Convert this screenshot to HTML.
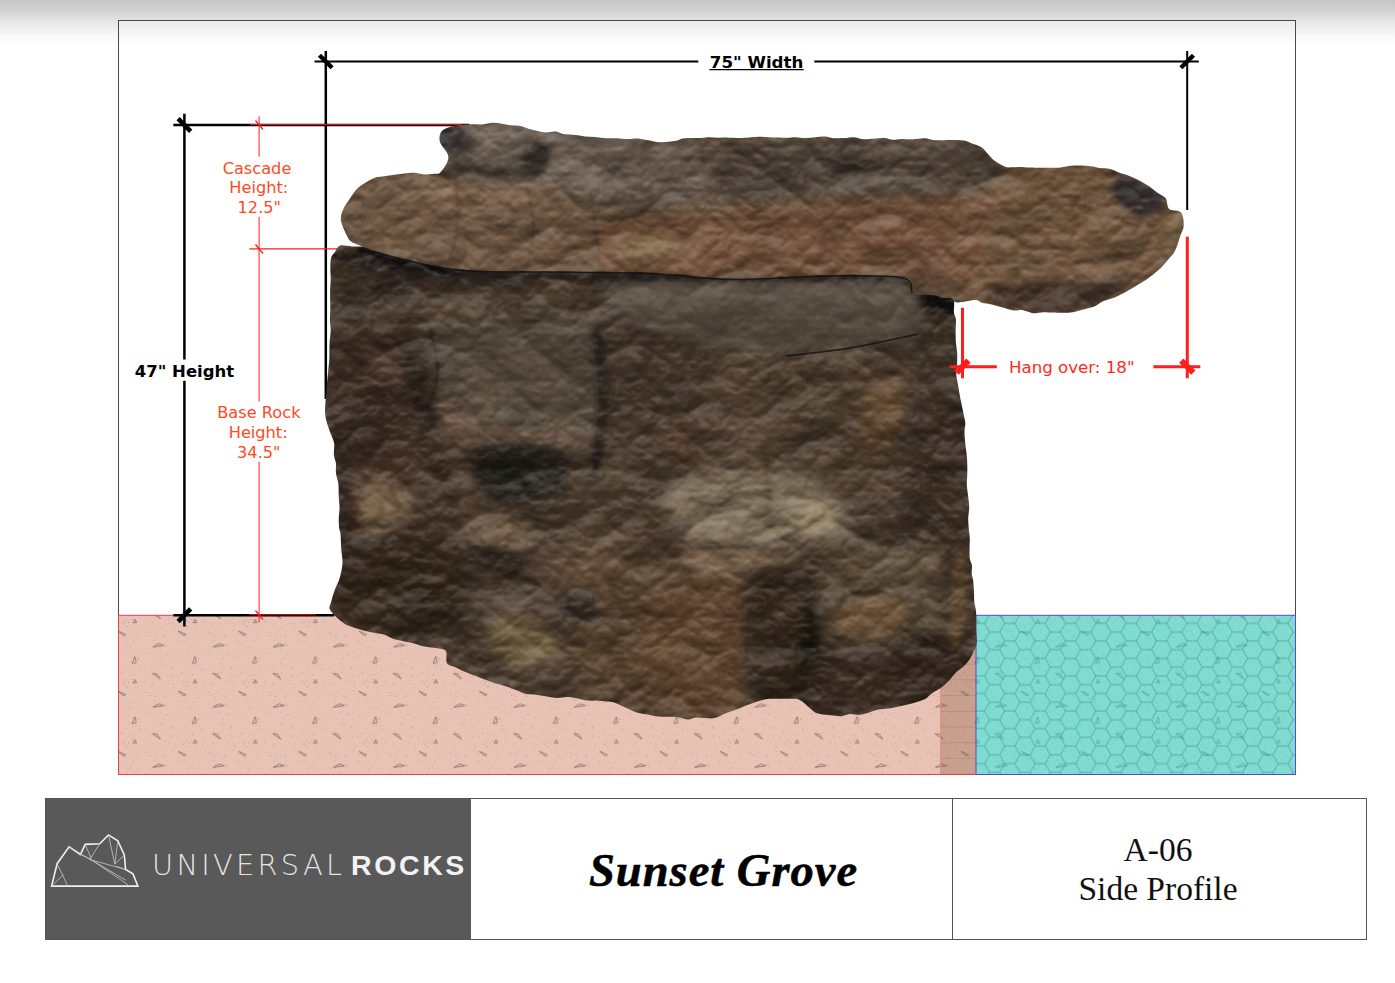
<!DOCTYPE html>
<html lang="en"><head><meta charset="utf-8"><title>Sunset Grove A-06 Side Profile</title>
<style>
html,body{margin:0;padding:0;background:#fff;}
body{width:1395px;height:983px;overflow:hidden;position:relative;font-family:"Liberation Sans",sans-serif;}
#top{position:absolute;left:0;top:0;width:1395px;height:44px;background:linear-gradient(#c6c6c6 0px,#d4d4d4 12px,#e9e9e9 24px,#f8f8f8 35px,#fff 44px);}
svg#dwg{position:absolute;left:0;top:0;}
.vd{font-family:"DejaVu Sans","Liberation Sans",sans-serif;}
#tbl{position:absolute;left:45px;top:798px;width:1322px;height:142px;border:1px solid #555;box-sizing:border-box;background:#fff;}
#c1{position:absolute;left:0;top:0;width:425px;height:140px;background:#595959;}
#c2{position:absolute;left:425px;top:0;width:482px;height:140px;border-right:1px solid #555;box-sizing:border-box;}
#c3{position:absolute;left:907px;top:0;width:413px;height:140px;}
#title{position:absolute;left:12px;top:1.6px;width:100%;text-align:center;letter-spacing:1.0px;-webkit-text-stroke:0.55px #000;font-family:"Liberation Serif",serif;font-weight:bold;font-style:italic;font-size:46.5px;line-height:139px;color:#000;white-space:nowrap;}
#c3 div{position:absolute;left:-1.5px;width:100%;text-align:center;font-family:"Liberation Serif",serif;font-size:33.5px;line-height:39px;color:#111;white-space:nowrap;}
#uni{position:absolute;left:106px;top:46px;font-family:"DejaVu Sans Light","DejaVu Sans","Liberation Sans",sans-serif;font-weight:200;font-size:28.8px;line-height:40px;letter-spacing:3.3px;color:#e4e4e4;white-space:nowrap;}
#rocks{position:absolute;left:305px;top:46px;font-family:"Liberation Sans",sans-serif;font-weight:bold;font-size:28.5px;line-height:40px;letter-spacing:2.6px;color:#f2f2f2;white-space:nowrap;}
</style></head><body>
<div id="top"></div>
<svg id="dwg" width="1395" height="983" viewBox="0 0 1395 983">
<defs>

<pattern id="soil" x="134.9" y="621" width="60.2" height="60.2" patternUnits="userSpaceOnUse">
<circle cx="14.3" cy="32.8" r="0.4" fill="#7c6f69"/>
<circle cx="55.1" cy="28.5" r="0.3" fill="#7c6f69"/>
<circle cx="36.5" cy="54.7" r="0.45" fill="#7c6f69"/>
<circle cx="15.6" cy="14.1" r="0.45" fill="#7c6f69"/>
<circle cx="32.6" cy="33.1" r="0.45" fill="#7c6f69"/>
<circle cx="38.5" cy="9.1" r="0.35" fill="#7c6f69"/>
<circle cx="52.3" cy="31.5" r="0.3" fill="#7c6f69"/>
<circle cx="40.4" cy="3.9" r="0.3" fill="#7c6f69"/>
<circle cx="18.1" cy="1.9" r="0.4" fill="#7c6f69"/>
<circle cx="28.5" cy="43.3" r="0.45" fill="#7c6f69"/>
<circle cx="43.0" cy="55.5" r="0.45" fill="#7c6f69"/>
<circle cx="43.8" cy="34.7" r="0.35" fill="#7c6f69"/>
<circle cx="52.9" cy="5.9" r="0.35" fill="#7c6f69"/>
<circle cx="29.8" cy="15.5" r="0.45" fill="#7c6f69"/>
<circle cx="46.9" cy="51.5" r="0.45" fill="#7c6f69"/>
<circle cx="30.5" cy="23.2" r="0.4" fill="#7c6f69"/>
<circle cx="32.2" cy="24.5" r="0.35" fill="#7c6f69"/>
<circle cx="54.4" cy="41.1" r="0.3" fill="#7c6f69"/>
<circle cx="51.6" cy="59.7" r="0.35" fill="#7c6f69"/>
<circle cx="42.1" cy="19.6" r="0.3" fill="#7c6f69"/>
<circle cx="43.0" cy="12.7" r="0.4" fill="#7c6f69"/>
<circle cx="17.2" cy="3.8" r="0.45" fill="#7c6f69"/>
<circle cx="5.3" cy="48.2" r="0.45" fill="#7c6f69"/>
<circle cx="54.0" cy="1.2" r="0.45" fill="#7c6f69"/>
<circle cx="46.3" cy="52.5" r="0.3" fill="#7c6f69"/>
<circle cx="36.4" cy="45.9" r="0.45" fill="#7c6f69"/>
<circle cx="43.3" cy="19.9" r="0.4" fill="#7c6f69"/>
<circle cx="30.4" cy="60.1" r="0.4" fill="#7c6f69"/>
<circle cx="0.4" cy="6.5" r="0.3" fill="#7c6f69"/>
<circle cx="57.1" cy="58.5" r="0.4" fill="#7c6f69"/>
<circle cx="36.8" cy="9.4" r="0.3" fill="#7c6f69"/>
<circle cx="59.0" cy="20.5" r="0.4" fill="#7c6f69"/>
<circle cx="57.7" cy="54.0" r="0.45" fill="#7c6f69"/>
<circle cx="22.7" cy="52.4" r="0.45" fill="#7c6f69"/>
<circle cx="38.8" cy="35.9" r="0.3" fill="#7c6f69"/>
<circle cx="37.3" cy="56.6" r="0.4" fill="#7c6f69"/>
<circle cx="26.0" cy="43.4" r="0.35" fill="#7c6f69"/>
<circle cx="56.4" cy="26.3" r="0.4" fill="#7c6f69"/>
<circle cx="31.4" cy="33.0" r="0.3" fill="#7c6f69"/>
<circle cx="47.5" cy="59.4" r="0.4" fill="#7c6f69"/>
<circle cx="1.2" cy="37.1" r="0.35" fill="#7c6f69"/>
<circle cx="3.6" cy="37.8" r="0.45" fill="#7c6f69"/>
<circle cx="21.2" cy="55.2" r="0.4" fill="#7c6f69"/>
<circle cx="44.4" cy="1.3" r="0.3" fill="#7c6f69"/>
<circle cx="57.5" cy="1.3" r="0.4" fill="#7c6f69"/>
<circle cx="15.1" cy="27.5" r="0.4" fill="#7c6f69"/>
<circle cx="10.7" cy="11.2" r="0.4" fill="#7c6f69"/>
<circle cx="50.8" cy="15.9" r="0.45" fill="#7c6f69"/>
<circle cx="6.3" cy="48.9" r="0.35" fill="#7c6f69"/>
<circle cx="18.7" cy="13.4" r="0.4" fill="#7c6f69"/>
<circle cx="14.4" cy="11.3" r="0.45" fill="#7c6f69"/>
<circle cx="39.1" cy="5.8" r="0.4" fill="#7c6f69"/>
<circle cx="57.1" cy="40.6" r="0.35" fill="#7c6f69"/>
<circle cx="26.4" cy="51.5" r="0.35" fill="#7c6f69"/>
<circle cx="4.8" cy="44.7" r="0.35" fill="#7c6f69"/>
<circle cx="53.3" cy="27.2" r="0.35" fill="#7c6f69"/>
<circle cx="47.4" cy="2.0" r="0.35" fill="#7c6f69"/>
<circle cx="19.0" cy="50.3" r="0.35" fill="#7c6f69"/>
<circle cx="52.0" cy="20.5" r="0.3" fill="#7c6f69"/>
<circle cx="48.5" cy="20.8" r="0.35" fill="#7c6f69"/>
<circle cx="25.4" cy="31.2" r="0.4" fill="#7c6f69"/>
<circle cx="28.0" cy="38.2" r="0.4" fill="#7c6f69"/>
<circle cx="25.3" cy="24.7" r="0.45" fill="#7c6f69"/>
<circle cx="9.4" cy="0.3" r="0.45" fill="#7c6f69"/>
<circle cx="33.6" cy="59.3" r="0.35" fill="#7c6f69"/>
<circle cx="1.9" cy="27.5" r="0.4" fill="#7c6f69"/>
<circle cx="32.7" cy="53.6" r="0.3" fill="#7c6f69"/>
<circle cx="51.7" cy="58.5" r="0.3" fill="#7c6f69"/>
<circle cx="48.8" cy="2.7" r="0.35" fill="#7c6f69"/>
<circle cx="54.0" cy="54.2" r="0.3" fill="#7c6f69"/>
<circle cx="0.8" cy="44.9" r="0.35" fill="#7c6f69"/>
<circle cx="30.3" cy="14.4" r="0.3" fill="#7c6f69"/>
<circle cx="31.6" cy="24.9" r="0.3" fill="#7c6f69"/>
<circle cx="20.5" cy="15.2" r="0.45" fill="#7c6f69"/>
<circle cx="48.9" cy="3.7" r="0.35" fill="#7c6f69"/>
<circle cx="11.9" cy="32.2" r="0.3" fill="#7c6f69"/>
<circle cx="10.3" cy="47.7" r="0.35" fill="#7c6f69"/>
<circle cx="49.6" cy="0.5" r="0.45" fill="#7c6f69"/>
<circle cx="3.0" cy="16.3" r="0.4" fill="#7c6f69"/>
<circle cx="37.2" cy="31.3" r="0.3" fill="#7c6f69"/>
<circle cx="28.5" cy="46.7" r="0.3" fill="#7c6f69"/>
<circle cx="51.6" cy="46.7" r="0.3" fill="#7c6f69"/>
<circle cx="7.5" cy="4.1" r="0.3" fill="#7c6f69"/>
<circle cx="51.4" cy="5.2" r="0.45" fill="#7c6f69"/>
<circle cx="19.0" cy="18.9" r="0.4" fill="#7c6f69"/>
<circle cx="23.2" cy="23.5" r="0.4" fill="#7c6f69"/>
<circle cx="21.7" cy="11.5" r="0.4" fill="#7c6f69"/>
<circle cx="25.8" cy="7.7" r="0.3" fill="#7c6f69"/>
<circle cx="43.1" cy="22.9" r="0.3" fill="#7c6f69"/>
<circle cx="34.1" cy="2.6" r="0.45" fill="#7c6f69"/>
<circle cx="36.4" cy="47.1" r="0.45" fill="#7c6f69"/>
<circle cx="38.3" cy="2.6" r="0.45" fill="#7c6f69"/>
<circle cx="3.2" cy="37.8" r="0.4" fill="#7c6f69"/>
<circle cx="25.3" cy="41.8" r="0.45" fill="#7c6f69"/>
<circle cx="1.1" cy="13.2" r="0.4" fill="#7c6f69"/>
<path d="M0.0 -1.7 L1.7 1.7 L-1.7 1.7 Z" fill="none" stroke="#5c5450" stroke-width="0.6" stroke-linejoin="round"/>
<path d="M0.0 58.5 L1.7 61.9 L-1.7 61.9 Z" fill="none" stroke="#5c5450" stroke-width="0.6" stroke-linejoin="round"/>
<path d="M60.2 -1.7 L61.9 1.7 L58.5 1.7 Z" fill="none" stroke="#5c5450" stroke-width="0.6" stroke-linejoin="round"/>
<path d="M60.2 58.5 L61.9 61.9 L58.5 61.9 Z" fill="none" stroke="#5c5450" stroke-width="0.6" stroke-linejoin="round"/>
<path d="M43.5 10.0 L51.0 13.5 L48.5 14.5 Z" fill="none" stroke="#5c5450" stroke-width="0.6" stroke-linejoin="round"/>
<path d="M18.0 26.0 L24.0 22.5 L29.0 24.5 Z" fill="none" stroke="#5c5450" stroke-width="0.6" stroke-linejoin="round"/>
<path d="M-2.7 42.5 L-0.2 35.5 L1.3 41.5 Z" fill="none" stroke="#5c5450" stroke-width="0.6" stroke-linejoin="round"/>
<path d="M57.5 42.5 L60.0 35.5 L61.5 41.5 Z" fill="none" stroke="#5c5450" stroke-width="0.6" stroke-linejoin="round"/>
<path d="M17.5 -7.7 L25.5 -2.2 L22.0 -7.2 Z" fill="none" stroke="#5c5450" stroke-width="0.6" stroke-linejoin="round"/>
<path d="M17.5 52.5 L25.5 58.0 L22.0 53.0 Z" fill="none" stroke="#5c5450" stroke-width="0.6" stroke-linejoin="round"/>
</pattern>
<pattern id="soilt" x="134.9" y="621" width="60.2" height="60.2" patternUnits="userSpaceOnUse">
<circle cx="37.5" cy="44.7" r="0.3" fill="#4aa79c"/>
<circle cx="50.6" cy="46.7" r="0.35" fill="#4aa79c"/>
<circle cx="39.1" cy="54.2" r="0.3" fill="#4aa79c"/>
<circle cx="22.4" cy="52.3" r="0.45" fill="#4aa79c"/>
<circle cx="32.7" cy="34.6" r="0.3" fill="#4aa79c"/>
<circle cx="44.0" cy="24.6" r="0.35" fill="#4aa79c"/>
<circle cx="55.2" cy="46.1" r="0.35" fill="#4aa79c"/>
<circle cx="45.9" cy="4.3" r="0.45" fill="#4aa79c"/>
<circle cx="7.6" cy="0.1" r="0.3" fill="#4aa79c"/>
<circle cx="12.6" cy="13.0" r="0.35" fill="#4aa79c"/>
<circle cx="52.5" cy="17.4" r="0.35" fill="#4aa79c"/>
<circle cx="32.5" cy="40.8" r="0.35" fill="#4aa79c"/>
<circle cx="10.9" cy="58.3" r="0.35" fill="#4aa79c"/>
<circle cx="58.2" cy="53.8" r="0.4" fill="#4aa79c"/>
<circle cx="1.3" cy="25.0" r="0.35" fill="#4aa79c"/>
<circle cx="15.9" cy="20.0" r="0.3" fill="#4aa79c"/>
<circle cx="35.9" cy="42.6" r="0.3" fill="#4aa79c"/>
<circle cx="18.7" cy="49.3" r="0.45" fill="#4aa79c"/>
<circle cx="41.9" cy="11.1" r="0.45" fill="#4aa79c"/>
<circle cx="42.4" cy="3.4" r="0.3" fill="#4aa79c"/>
<circle cx="57.1" cy="21.5" r="0.45" fill="#4aa79c"/>
<circle cx="1.1" cy="47.4" r="0.4" fill="#4aa79c"/>
<circle cx="22.7" cy="50.6" r="0.45" fill="#4aa79c"/>
<circle cx="2.8" cy="10.9" r="0.35" fill="#4aa79c"/>
<circle cx="7.2" cy="14.8" r="0.45" fill="#4aa79c"/>
<circle cx="20.7" cy="21.4" r="0.4" fill="#4aa79c"/>
<circle cx="46.7" cy="6.5" r="0.4" fill="#4aa79c"/>
<circle cx="51.8" cy="2.2" r="0.3" fill="#4aa79c"/>
<circle cx="12.6" cy="30.9" r="0.4" fill="#4aa79c"/>
<circle cx="55.3" cy="20.5" r="0.3" fill="#4aa79c"/>
<circle cx="18.8" cy="19.1" r="0.35" fill="#4aa79c"/>
<circle cx="48.1" cy="37.7" r="0.4" fill="#4aa79c"/>
<circle cx="60.0" cy="9.7" r="0.3" fill="#4aa79c"/>
<circle cx="4.9" cy="36.2" r="0.45" fill="#4aa79c"/>
<circle cx="1.9" cy="44.6" r="0.4" fill="#4aa79c"/>
<circle cx="49.7" cy="27.4" r="0.45" fill="#4aa79c"/>
<circle cx="8.8" cy="58.9" r="0.3" fill="#4aa79c"/>
<circle cx="48.3" cy="20.1" r="0.35" fill="#4aa79c"/>
<circle cx="7.9" cy="44.0" r="0.35" fill="#4aa79c"/>
<circle cx="38.0" cy="47.4" r="0.3" fill="#4aa79c"/>
<circle cx="10.2" cy="22.5" r="0.3" fill="#4aa79c"/>
<circle cx="50.9" cy="17.7" r="0.45" fill="#4aa79c"/>
<circle cx="55.5" cy="37.3" r="0.35" fill="#4aa79c"/>
<circle cx="58.8" cy="27.3" r="0.45" fill="#4aa79c"/>
<circle cx="41.5" cy="19.1" r="0.4" fill="#4aa79c"/>
<circle cx="17.5" cy="24.3" r="0.35" fill="#4aa79c"/>
<circle cx="6.8" cy="49.5" r="0.35" fill="#4aa79c"/>
<circle cx="37.7" cy="30.1" r="0.4" fill="#4aa79c"/>
<circle cx="10.8" cy="29.6" r="0.4" fill="#4aa79c"/>
<circle cx="3.8" cy="47.9" r="0.4" fill="#4aa79c"/>
<circle cx="41.8" cy="40.0" r="0.4" fill="#4aa79c"/>
<circle cx="21.9" cy="42.4" r="0.4" fill="#4aa79c"/>
<circle cx="50.3" cy="15.9" r="0.4" fill="#4aa79c"/>
<circle cx="57.6" cy="20.5" r="0.35" fill="#4aa79c"/>
<circle cx="35.0" cy="0.7" r="0.4" fill="#4aa79c"/>
<circle cx="19.6" cy="16.5" r="0.4" fill="#4aa79c"/>
<circle cx="49.2" cy="39.0" r="0.4" fill="#4aa79c"/>
<circle cx="20.9" cy="38.8" r="0.45" fill="#4aa79c"/>
<circle cx="21.1" cy="50.7" r="0.45" fill="#4aa79c"/>
<circle cx="58.8" cy="57.6" r="0.35" fill="#4aa79c"/>
<circle cx="31.9" cy="10.0" r="0.4" fill="#4aa79c"/>
<circle cx="56.4" cy="28.7" r="0.3" fill="#4aa79c"/>
<circle cx="43.3" cy="44.0" r="0.35" fill="#4aa79c"/>
<circle cx="37.1" cy="56.4" r="0.45" fill="#4aa79c"/>
<circle cx="18.2" cy="33.3" r="0.4" fill="#4aa79c"/>
<circle cx="43.4" cy="1.7" r="0.35" fill="#4aa79c"/>
<circle cx="35.3" cy="37.6" r="0.35" fill="#4aa79c"/>
<circle cx="13.2" cy="41.3" r="0.3" fill="#4aa79c"/>
<circle cx="59.4" cy="59.0" r="0.35" fill="#4aa79c"/>
<circle cx="3.3" cy="8.0" r="0.4" fill="#4aa79c"/>
<circle cx="58.3" cy="29.1" r="0.3" fill="#4aa79c"/>
<circle cx="25.0" cy="21.1" r="0.3" fill="#4aa79c"/>
<circle cx="35.5" cy="14.3" r="0.4" fill="#4aa79c"/>
<circle cx="0.0" cy="24.4" r="0.4" fill="#4aa79c"/>
<circle cx="51.5" cy="52.2" r="0.4" fill="#4aa79c"/>
<circle cx="58.1" cy="33.1" r="0.4" fill="#4aa79c"/>
<circle cx="5.7" cy="32.8" r="0.4" fill="#4aa79c"/>
<circle cx="57.3" cy="17.7" r="0.4" fill="#4aa79c"/>
<circle cx="49.3" cy="25.2" r="0.4" fill="#4aa79c"/>
<circle cx="28.1" cy="9.4" r="0.45" fill="#4aa79c"/>
<circle cx="33.9" cy="57.6" r="0.35" fill="#4aa79c"/>
<circle cx="36.6" cy="21.1" r="0.3" fill="#4aa79c"/>
<circle cx="23.0" cy="19.6" r="0.35" fill="#4aa79c"/>
<circle cx="19.6" cy="52.8" r="0.45" fill="#4aa79c"/>
<circle cx="25.8" cy="58.8" r="0.45" fill="#4aa79c"/>
<circle cx="17.5" cy="58.5" r="0.45" fill="#4aa79c"/>
<circle cx="23.1" cy="51.5" r="0.35" fill="#4aa79c"/>
<circle cx="35.9" cy="15.6" r="0.4" fill="#4aa79c"/>
<circle cx="29.9" cy="25.0" r="0.4" fill="#4aa79c"/>
<circle cx="56.9" cy="18.5" r="0.4" fill="#4aa79c"/>
<circle cx="8.6" cy="1.4" r="0.45" fill="#4aa79c"/>
<circle cx="14.8" cy="2.4" r="0.35" fill="#4aa79c"/>
<circle cx="49.8" cy="0.8" r="0.4" fill="#4aa79c"/>
<circle cx="14.7" cy="28.6" r="0.3" fill="#4aa79c"/>
<circle cx="14.8" cy="16.1" r="0.35" fill="#4aa79c"/>
<path d="M0.0 -1.7 L1.7 1.7 L-1.7 1.7 Z" fill="none" stroke="#3f978d" stroke-width="0.6" stroke-linejoin="round"/>
<path d="M0.0 58.5 L1.7 61.9 L-1.7 61.9 Z" fill="none" stroke="#3f978d" stroke-width="0.6" stroke-linejoin="round"/>
<path d="M60.2 -1.7 L61.9 1.7 L58.5 1.7 Z" fill="none" stroke="#3f978d" stroke-width="0.6" stroke-linejoin="round"/>
<path d="M60.2 58.5 L61.9 61.9 L58.5 61.9 Z" fill="none" stroke="#3f978d" stroke-width="0.6" stroke-linejoin="round"/>
<path d="M43.5 10.0 L51.0 13.5 L48.5 14.5 Z" fill="none" stroke="#3f978d" stroke-width="0.6" stroke-linejoin="round"/>
<path d="M18.0 26.0 L24.0 22.5 L29.0 24.5 Z" fill="none" stroke="#3f978d" stroke-width="0.6" stroke-linejoin="round"/>
<path d="M-2.7 42.5 L-0.2 35.5 L1.3 41.5 Z" fill="none" stroke="#3f978d" stroke-width="0.6" stroke-linejoin="round"/>
<path d="M57.5 42.5 L60.0 35.5 L61.5 41.5 Z" fill="none" stroke="#3f978d" stroke-width="0.6" stroke-linejoin="round"/>
<path d="M17.5 -7.7 L25.5 -2.2 L22.0 -7.2 Z" fill="none" stroke="#3f978d" stroke-width="0.6" stroke-linejoin="round"/>
<path d="M17.5 52.5 L25.5 58.0 L22.0 53.0 Z" fill="none" stroke="#3f978d" stroke-width="0.6" stroke-linejoin="round"/>
</pattern>
<pattern id="hex" x="984.5" y="614.6" width="30.36" height="17.53" patternUnits="userSpaceOnUse"><path d="M0 8.76 L5.06 0 L15.18 0 L20.24 8.76 L15.18 17.53 L5.06 17.53 Z M20.24 8.76 L30.36 8.76" fill="none" stroke="#55a79c" stroke-width="0.9"/></pattern>
<pattern id="brick" x="940" y="616.6" width="40" height="15.7" patternUnits="userSpaceOnUse"><path d="M0 0.5 H40" stroke="#b38d7b" stroke-width="0.8"/></pattern>
<linearGradient id="fg" x1="0" y1="0" x2="0" y2="1"><stop offset="0" stop-color="#ebebeb"/><stop offset="1" stop-color="#ffffff"/></linearGradient>
</defs>

<rect x="118.5" y="20.5" width="1177" height="754" fill="#fff" stroke="#4a4a4a" stroke-width="1"/>
<rect x="119" y="21" width="1176" height="24" fill="url(#fg)"/>
<rect x="118.5" y="615.3" width="822" height="159.2" fill="#e8c3b5"/>
<rect x="118.5" y="615.3" width="822" height="159.2" fill="url(#soil)"/>
<rect x="940.5" y="615.3" width="35.5" height="159.2" fill="#c9a08d"/>
<rect x="940.5" y="615.3" width="35.5" height="159.2" fill="url(#brick)"/>
<rect x="940.5" y="615.3" width="35.5" height="159.2" fill="url(#soil)"/>
<path d="M940.5 615.3 V774.5" stroke="#e98d84" stroke-width="1"/>
<path d="M118.5 615.3 H941 M118.5 615.3 V774.5 H976" fill="none" stroke="#e8404a" stroke-width="1"/>
<rect x="976" y="615.3" width="319.5" height="159.2" fill="#80dbd1"/>
<rect x="976" y="615.3" width="319.5" height="159.2" fill="url(#hex)"/>
<rect x="976" y="615.3" width="319.5" height="159.2" fill="url(#soilt)"/>
<rect x="976" y="615.3" width="319.5" height="159.2" fill="none" stroke="#5b48cc" stroke-width="1"/>
<g stroke="#000" stroke-width="2.5" fill="none">
<path d="M184.4 113.8 V359.5 M184.4 380.7 V626.5"/>
<path d="M173.3 125 H469.5"/>
<path d="M173.3 615.2 H334"/>
<path d="M325.8 51 V399"/>
</g>
<g stroke="#000" stroke-width="2" fill="none">
<path d="M314.5 61.5 H698.3 M814.3 61.5 H1198.8"/>
<path d="M1187.2 51 V210"/>
</g>
<g stroke="#ff1d1d" fill="none">
<path d="M250.2 124.5 H462" stroke-width="1.1" stroke="#d81414"/>
<path d="M249.4 248.9 H366" stroke-width="1.4"/>
<path d="M249.4 614.7 H315.6" stroke-width="1.1" stroke="#e01515"/>
<path d="M259.1 116.3 V156.6 M259.1 216.8 V401.5 M259.1 461.7 V622.3" stroke-width="1"/>
<path d="M255.5 120.5 L263 129.5 M255.5 244.5 L263 253.5 M255.5 610.5 L263 619.5" stroke-width="1.3"/>
</g>
<defs>
<mask id="capmask" maskUnits="userSpaceOnUse" x="320" y="110" width="890" height="220"><path d="M442.2 130.8 C444.8 128.0 450.9 126.5 455.6 125.5 C460.2 124.4 465.6 124.6 470.0 124.4 C474.4 124.2 478.2 124.8 482.2 124.5 C486.2 124.2 489.8 122.7 494.1 122.8 C498.4 122.8 503.8 124.4 508.2 124.9 C512.6 125.5 516.7 125.1 520.6 125.9 C524.4 126.7 527.2 128.4 531.3 129.5 C535.5 130.6 541.4 132.0 545.4 132.4 C549.4 132.7 552.4 131.3 555.3 131.6 C558.3 131.8 559.8 133.4 563.2 134.0 C566.6 134.6 572.2 134.6 575.8 135.0 C579.4 135.4 581.8 136.1 585.0 136.4 C588.2 136.7 591.4 136.7 595.0 137.0 C598.5 137.3 602.7 138.1 606.4 138.3 C610.1 138.5 613.6 138.1 617.1 138.2 C620.7 138.3 624.5 139.0 628.0 139.1 C631.4 139.1 634.7 138.3 637.8 138.5 C641.0 138.7 643.0 139.5 646.7 140.1 C650.5 140.8 655.4 142.2 660.3 142.3 C665.2 142.4 672.2 141.5 676.1 140.8 C680.0 140.1 679.8 138.7 683.9 138.3 C687.9 137.8 696.3 138.2 700.5 138.1 C704.7 137.9 706.0 137.3 708.9 137.3 C711.8 137.2 714.9 137.7 717.9 137.7 C721.0 137.8 723.5 137.5 727.1 137.5 C730.6 137.6 735.5 138.1 739.2 138.1 C742.9 138.1 746.0 137.8 749.3 137.6 C752.6 137.4 755.6 136.9 759.0 136.8 C762.4 136.8 766.5 137.1 769.6 137.2 C772.6 137.3 774.2 137.4 777.2 137.5 C780.1 137.6 784.3 137.8 787.4 137.8 C790.5 137.7 792.8 137.2 795.8 137.3 C798.9 137.3 802.3 138.1 805.5 138.1 C808.7 138.1 811.9 137.5 815.1 137.3 C818.4 137.0 822.0 136.4 825.0 136.6 C828.0 136.7 829.8 137.9 833.2 138.2 C836.5 138.4 841.5 138.2 844.9 138.1 C848.3 137.9 850.5 137.1 853.6 137.3 C856.8 137.5 860.5 139.1 864.0 139.3 C867.5 139.5 871.2 138.7 874.6 138.5 C878.0 138.3 881.4 137.8 884.4 138.1 C887.5 138.3 890.0 139.7 892.7 139.8 C895.5 140.0 897.9 139.0 901.2 138.9 C904.5 138.8 908.5 139.4 912.4 139.3 C916.4 139.2 921.2 138.1 924.8 138.3 C928.4 138.4 931.1 139.9 934.2 140.2 C937.3 140.5 940.4 140.3 943.1 140.2 C945.9 140.2 947.2 140.0 950.7 140.0 C954.1 140.1 960.2 139.9 963.8 140.5 C967.3 141.0 969.1 142.3 972.0 143.4 C974.9 144.5 978.4 145.3 981.0 147.0 C983.7 148.8 985.8 151.7 988.0 154.0 C990.2 156.2 991.5 158.5 994.3 160.6 C997.2 162.7 1002.1 165.7 1005.1 166.8 C1008.1 167.9 1009.9 167.2 1012.4 167.3 C1014.8 167.3 1016.8 166.9 1019.7 167.0 C1022.6 167.0 1026.0 167.4 1029.6 167.5 C1033.1 167.7 1037.5 167.7 1041.0 167.7 C1044.5 167.8 1047.6 167.7 1050.7 167.7 C1053.7 167.7 1056.0 168.0 1059.3 167.7 C1062.7 167.4 1067.2 166.2 1070.6 165.8 C1074.0 165.4 1076.1 165.4 1079.6 165.5 C1083.0 165.6 1088.0 165.9 1091.3 166.3 C1094.5 166.7 1096.0 167.5 1099.1 168.0 C1102.3 168.4 1106.8 168.1 1110.2 168.9 C1113.7 169.7 1116.5 171.6 1119.6 172.8 C1122.7 173.9 1125.6 174.5 1128.8 175.7 C1131.9 176.9 1135.2 178.2 1138.5 179.9 C1141.8 181.6 1145.4 184.0 1148.6 186.1 C1151.8 188.3 1154.9 190.9 1157.8 192.9 C1160.6 194.9 1163.9 195.7 1165.8 198.3 C1167.7 201.0 1166.6 206.5 1169.1 208.9 C1171.7 211.2 1178.6 209.6 1181.0 212.4 C1183.5 215.2 1183.8 221.8 1183.7 225.7 C1183.6 229.6 1181.8 231.5 1180.4 235.6 C1179.0 239.7 1177.2 246.6 1175.2 250.5 C1173.3 254.4 1171.0 256.2 1168.7 259.1 C1166.4 261.9 1164.4 264.4 1161.3 267.4 C1158.3 270.3 1153.4 274.3 1150.4 276.6 C1147.4 279.0 1146.3 279.8 1143.4 281.6 C1140.4 283.5 1136.3 285.9 1133.0 287.8 C1129.6 289.7 1126.8 291.4 1123.4 293.2 C1120.0 294.9 1116.0 296.9 1112.6 298.3 C1109.2 299.6 1105.7 300.0 1102.8 301.3 C1099.8 302.7 1098.2 304.9 1094.9 306.2 C1091.6 307.6 1086.8 308.5 1083.2 309.5 C1079.5 310.5 1076.0 311.7 1072.8 312.3 C1069.5 312.8 1067.0 312.8 1063.5 312.8 C1060.1 312.9 1055.6 312.6 1052.3 312.5 C1048.9 312.4 1046.5 312.1 1043.3 312.2 C1040.0 312.3 1036.3 313.5 1032.8 313.2 C1029.4 312.8 1025.6 310.6 1022.4 310.1 C1019.2 309.7 1017.1 311.0 1013.8 310.5 C1010.5 310.1 1006.3 308.5 1002.6 307.5 C998.9 306.4 995.1 305.3 991.7 304.5 C988.2 303.7 984.9 303.4 982.1 302.7 C979.3 302.0 979.0 300.1 974.9 300.0 C970.7 300.0 961.2 302.7 957.1 302.4 C953.1 302.0 953.0 298.7 950.6 298.0 C948.1 297.3 945.6 298.4 942.7 297.9 C939.8 297.4 936.8 295.7 933.2 295.2 C929.5 294.7 923.9 294.9 920.7 294.7 C917.6 294.4 916.0 295.4 914.1 293.6 C912.1 291.9 911.1 286.8 909.0 284.1 C906.9 281.5 903.6 279.1 901.4 277.7 C899.2 276.3 897.9 276.1 895.6 275.8 C893.3 275.4 890.7 275.8 887.7 275.9 C884.8 276.0 881.2 276.3 877.9 276.3 C874.5 276.2 871.0 275.9 867.4 275.6 C863.9 275.3 859.9 274.6 856.6 274.4 C853.3 274.2 850.9 274.4 847.5 274.6 C844.1 274.8 839.9 275.6 836.3 275.7 C832.6 275.8 829.1 275.4 825.8 275.3 C822.4 275.3 819.0 275.2 816.1 275.3 C813.1 275.5 811.1 276.0 808.3 276.4 C805.5 276.7 802.7 277.3 799.3 277.4 C795.9 277.6 791.6 277.3 788.1 277.2 C784.7 277.0 781.8 276.3 778.6 276.6 C775.4 276.9 771.9 278.4 769.0 278.9 C766.1 279.3 764.1 279.2 761.1 279.2 C758.0 279.3 753.8 279.2 750.7 279.1 C747.6 279.0 745.5 278.9 742.5 278.8 C739.6 278.6 736.5 278.5 733.2 278.4 C729.8 278.3 725.5 278.2 722.4 278.2 C719.4 278.2 717.6 278.5 714.7 278.3 C711.9 278.2 708.8 277.6 705.5 277.4 C702.1 277.3 697.9 277.8 694.8 277.3 C691.7 276.9 689.7 275.3 686.8 274.8 C683.9 274.2 680.7 274.1 677.4 274.1 C674.1 274.1 670.4 275.2 667.2 275.0 C663.9 274.8 660.7 273.3 658.0 272.9 C655.3 272.6 654.2 273.0 651.1 272.8 C647.9 272.7 642.8 271.9 639.2 271.9 C635.7 271.9 633.1 272.7 629.9 272.9 C626.7 273.1 623.3 273.1 620.2 273.1 C617.1 273.1 614.2 273.4 611.4 273.1 C608.5 272.9 606.2 271.8 603.0 271.6 C599.7 271.4 595.3 271.8 591.7 271.9 C588.0 272.0 584.6 272.5 581.0 272.3 C577.4 272.0 572.9 270.9 570.0 270.7 C567.1 270.6 566.3 271.1 563.5 271.3 C560.8 271.4 556.9 271.7 553.5 271.6 C550.1 271.5 546.4 270.5 543.3 270.7 C540.1 270.9 537.7 272.7 534.7 272.7 C531.6 272.7 528.3 270.9 524.7 270.8 C521.1 270.6 516.4 271.7 513.1 271.8 C509.8 272.0 508.0 271.6 505.0 271.6 C501.9 271.6 498.2 271.8 494.9 271.7 C491.6 271.7 488.0 271.5 485.0 271.3 C482.0 271.1 479.6 270.6 476.9 270.4 C474.3 270.2 472.3 270.3 469.1 270.1 C465.9 270.0 461.6 269.7 457.9 269.5 C454.2 269.3 450.1 269.2 447.0 268.7 C443.8 268.2 441.9 267.3 439.0 266.6 C436.0 266.0 432.4 265.2 429.1 264.7 C425.9 264.2 422.6 264.5 419.6 263.8 C416.6 263.1 414.7 261.3 411.4 260.5 C408.1 259.6 403.5 259.3 399.9 258.6 C396.4 257.8 393.5 257.1 390.1 256.0 C386.6 254.9 382.6 253.1 379.4 252.0 C376.1 250.9 373.1 250.3 370.5 249.5 C368.0 248.7 367.2 248.3 364.1 247.1 C361.0 245.8 354.6 243.9 351.8 242.1 C348.9 240.3 348.9 239.7 347.1 236.1 C345.3 232.6 341.7 225.1 341.0 220.8 C340.3 216.5 341.4 213.8 342.8 210.2 C344.3 206.6 347.4 202.6 349.6 199.1 C351.9 195.6 354.0 191.9 356.6 189.2 C359.3 186.4 362.7 184.4 365.6 182.6 C368.5 180.7 371.3 178.9 374.1 177.9 C376.9 176.9 378.9 177.1 382.5 176.5 C386.1 176.0 392.3 175.1 395.9 174.5 C399.6 174.0 401.4 173.8 404.5 173.5 C407.6 173.2 411.4 172.7 414.6 172.8 C417.8 173.0 420.3 174.2 423.5 174.4 C426.7 174.5 430.9 174.1 433.8 173.7 C436.7 173.3 438.3 174.8 440.7 172.0 C443.2 169.3 448.6 162.0 448.4 157.0 C448.3 152.0 440.9 146.2 439.9 141.8 C438.8 137.5 439.6 133.5 442.2 130.8 Z" fill="#fff" filter="url(#b1)"/></mask>
<mask id="basemask" maskUnits="userSpaceOnUse" x="310" y="230" width="690" height="500"><path d="M335.0 252.0 C336.5 250.0 337.3 246.5 340.1 245.6 C342.9 244.7 347.8 246.3 351.8 246.4 C355.9 246.6 361.0 246.3 364.4 246.6 C367.8 246.9 369.3 247.9 372.1 248.2 C374.9 248.6 378.1 248.4 381.1 249.0 C384.2 249.5 387.2 250.5 390.6 251.6 C394.0 252.6 397.8 254.4 401.3 255.2 C404.8 256.0 408.6 255.9 411.7 256.3 C414.8 256.7 417.3 257.1 419.9 257.5 C422.5 257.9 424.9 258.1 427.3 258.7 C429.7 259.2 431.9 260.1 434.1 260.9 C436.3 261.7 437.7 263.0 440.7 263.5 C443.6 264.1 447.0 264.0 451.8 264.1 C456.6 264.1 465.4 263.9 469.4 264.0 C473.4 264.0 473.5 264.0 475.7 264.4 C477.9 264.9 480.3 266.5 482.8 266.6 C485.2 266.7 487.7 265.0 490.4 265.0 C493.0 265.0 495.9 266.2 498.6 266.5 C501.3 266.9 503.7 266.9 506.5 266.9 C509.3 267.0 512.4 266.8 515.2 266.9 C518.0 266.9 520.1 267.6 523.3 267.4 C526.4 267.3 530.6 265.8 533.9 265.8 C537.2 265.7 540.0 267.0 543.0 267.2 C546.0 267.3 548.9 266.8 552.1 266.9 C555.3 267.0 558.7 267.7 562.1 267.9 C565.4 268.0 568.8 267.8 572.1 267.8 C575.4 267.8 578.4 268.1 581.9 268.0 C585.4 267.9 589.7 267.2 593.2 267.2 C596.6 267.3 599.2 268.3 602.5 268.3 C605.7 268.4 609.6 267.7 612.7 267.5 C615.9 267.3 618.2 267.3 621.4 267.3 C624.6 267.2 628.6 267.0 632.1 267.0 C635.5 267.0 638.7 267.3 641.9 267.4 C645.0 267.5 647.8 267.4 650.9 267.6 C654.0 267.8 657.4 268.5 660.5 268.6 C663.5 268.7 666.0 268.3 669.1 268.3 C672.3 268.3 676.1 268.6 679.3 268.6 C682.5 268.5 685.2 267.7 688.5 267.8 C691.8 268.0 695.5 269.6 699.0 269.6 C702.4 269.5 705.8 267.8 709.3 267.8 C712.8 267.7 716.3 269.2 719.8 269.3 C723.2 269.4 726.7 268.4 730.0 268.2 C733.3 268.0 736.4 268.0 739.6 268.0 C742.8 268.1 746.2 268.3 749.2 268.6 C752.3 268.9 755.0 269.9 758.0 270.0 C760.9 270.2 763.8 269.6 767.1 269.4 C770.5 269.2 774.9 268.7 778.0 268.8 C781.1 269.0 782.7 270.1 785.5 270.3 C788.3 270.5 791.8 270.2 794.6 270.1 C797.3 269.9 799.4 269.4 801.9 269.4 C804.5 269.4 807.5 269.9 810.1 270.2 C812.6 270.4 814.9 270.8 817.2 270.9 C819.5 271.0 820.4 270.7 824.0 270.5 C827.5 270.3 833.7 269.8 838.4 269.6 C843.2 269.5 848.6 269.3 852.5 269.5 C856.4 269.7 858.6 270.7 861.7 270.7 C864.8 270.7 868.1 269.5 871.2 269.3 C874.4 269.1 878.2 269.5 880.6 269.7 C883.1 269.9 883.6 270.0 885.9 270.4 C888.2 270.7 891.8 271.5 894.2 271.8 C896.6 272.0 897.0 271.2 900.1 271.6 C903.3 272.1 908.8 273.2 912.9 274.3 C917.1 275.4 921.5 276.9 925.0 278.2 C928.5 279.5 931.2 280.7 933.8 281.9 C936.4 283.1 938.3 283.8 940.8 285.5 C943.3 287.1 946.9 289.6 949.0 291.9 C951.2 294.3 953.0 296.2 953.9 299.6 C954.7 303.0 953.6 309.1 953.9 312.4 C954.3 315.7 955.7 316.5 955.9 319.5 C956.2 322.5 955.6 326.7 955.6 330.3 C955.6 333.9 955.6 337.5 955.8 341.4 C956.1 345.3 957.0 349.6 957.2 353.6 C957.4 357.6 957.1 361.7 957.0 365.2 C956.8 368.8 956.2 371.9 956.3 375.1 C956.5 378.4 957.5 381.7 958.0 384.7 C958.5 387.7 958.9 390.3 959.4 393.2 C959.9 396.2 960.5 399.2 961.2 402.6 C961.9 406.1 962.9 410.7 963.6 414.1 C964.3 417.5 965.2 420.1 965.3 423.0 C965.5 425.9 964.5 428.4 964.5 431.6 C964.5 434.9 964.8 438.8 965.2 442.5 C965.5 446.2 966.2 450.3 966.6 453.9 C966.9 457.5 967.2 460.3 967.3 463.9 C967.4 467.5 967.3 472.2 967.2 475.7 C967.1 479.1 966.6 481.3 966.8 484.7 C966.9 488.0 967.7 492.0 968.1 495.8 C968.5 499.6 969.2 503.6 969.2 507.4 C969.2 511.1 968.2 514.7 968.2 518.3 C968.1 521.9 968.6 525.4 968.8 528.8 C969.1 532.1 969.6 535.6 969.8 538.5 C969.9 541.4 969.6 543.0 969.6 546.3 C969.6 549.6 969.4 555.2 969.8 558.4 C970.2 561.6 971.7 563.1 972.0 565.5 C972.3 567.9 971.5 570.3 971.7 572.9 C971.9 575.5 972.9 577.9 973.2 581.1 C973.6 584.3 973.9 588.7 974.0 592.2 C974.2 595.6 974.0 598.5 974.3 601.8 C974.6 605.1 975.8 608.2 976.1 611.8 C976.4 615.5 975.9 620.1 975.9 623.6 C975.9 627.0 976.1 629.6 976.3 632.7 C976.4 635.9 977.2 639.5 976.9 642.5 C976.5 645.5 975.1 648.1 973.9 650.8 C972.8 653.6 971.4 656.5 969.8 659.0 C968.2 661.5 966.7 663.5 964.3 665.8 C962.0 668.0 958.5 670.1 955.9 672.6 C953.3 675.1 951.5 678.2 948.9 680.8 C946.3 683.4 943.1 686.2 940.4 688.2 C937.6 690.2 934.9 691.2 932.4 693.0 C929.8 694.8 928.0 697.4 925.1 699.0 C922.2 700.6 918.1 701.6 915.1 702.6 C912.0 703.5 909.6 704.1 906.7 704.8 C903.8 705.5 900.6 706.1 897.5 706.8 C894.5 707.4 891.7 708.1 888.3 708.6 C884.9 709.1 880.6 709.0 877.2 709.8 C873.7 710.5 870.5 712.2 867.5 713.1 C864.5 713.9 862.0 714.7 859.0 714.9 C856.1 715.0 852.8 713.8 849.8 714.0 C846.8 714.2 844.2 716.0 841.1 716.2 C837.9 716.4 834.1 715.7 830.7 715.3 C827.2 715.0 823.3 714.6 820.4 714.0 C817.6 713.4 817.0 713.7 813.7 711.5 C810.4 709.2 804.3 702.7 800.7 700.6 C797.0 698.4 795.2 699.1 791.6 698.8 C788.0 698.5 783.0 698.7 779.0 698.7 C774.9 698.8 771.0 698.5 767.2 699.0 C763.4 699.6 759.9 700.7 756.1 701.9 C752.4 703.0 748.2 704.7 744.8 706.0 C741.5 707.3 739.1 708.5 736.0 709.7 C732.9 710.9 729.7 711.5 726.1 712.9 C722.6 714.3 718.1 717.3 714.7 718.1 C711.2 718.9 708.5 718.0 705.4 717.9 C702.3 717.9 698.7 717.4 695.8 717.6 C692.9 717.9 691.0 719.6 688.0 719.5 C685.0 719.4 681.3 717.6 677.9 717.2 C674.5 716.7 670.7 716.8 667.5 716.7 C664.3 716.6 661.7 716.9 658.5 716.6 C655.3 716.3 651.7 715.4 648.5 714.8 C645.3 714.2 641.9 713.8 639.1 713.1 C636.4 712.4 634.6 711.5 631.8 710.4 C628.9 709.2 624.9 707.4 621.9 706.1 C619.0 704.8 616.7 703.2 614.1 702.5 C611.4 701.7 609.0 701.9 606.2 701.5 C603.3 701.2 599.8 700.7 596.7 700.5 C593.6 700.4 591.1 701.0 587.6 700.6 C584.2 700.2 579.7 698.8 576.2 698.2 C572.7 697.6 569.8 697.1 566.6 697.1 C563.4 697.1 560.5 698.3 557.0 698.1 C553.6 698.0 549.3 696.9 545.8 696.3 C542.3 695.8 539.3 695.2 536.0 694.8 C532.7 694.4 529.6 694.7 526.3 694.0 C522.9 693.2 519.3 691.4 515.9 690.1 C512.4 688.8 509.2 687.4 505.7 686.2 C502.1 685.0 498.1 684.1 494.6 683.0 C491.1 681.9 488.0 680.9 484.8 679.6 C481.5 678.4 478.5 677.2 475.0 675.8 C471.5 674.4 466.8 672.7 463.6 671.3 C460.3 669.9 458.3 668.7 455.6 667.3 C452.8 665.9 448.5 665.6 446.9 662.9 C445.3 660.2 447.5 653.7 446.0 651.2 C444.4 648.8 441.0 649.1 437.4 648.3 C433.8 647.5 428.3 647.3 424.3 646.5 C420.3 645.6 416.8 644.1 413.5 643.2 C410.2 642.4 408.0 642.2 404.6 641.5 C401.2 640.7 396.4 639.9 393.1 638.8 C389.8 637.6 387.8 635.7 384.8 634.7 C381.9 633.8 379.3 633.7 375.5 633.0 C371.8 632.2 366.5 631.3 362.4 630.2 C358.3 629.2 354.2 627.9 350.9 626.6 C347.6 625.3 345.9 625.0 342.5 622.3 C339.0 619.5 332.0 613.3 330.1 609.9 C328.3 606.5 330.4 605.3 331.2 601.8 C332.0 598.3 333.7 592.7 335.1 588.9 C336.4 585.1 338.2 582.8 339.4 578.9 C340.7 575.0 341.9 569.1 342.3 565.6 C342.8 562.0 342.4 560.5 342.2 557.6 C342.0 554.7 341.5 552.3 341.2 548.4 C340.9 544.4 340.9 537.4 340.5 534.0 C340.2 530.5 339.4 530.3 339.1 527.7 C338.8 525.1 338.7 521.7 338.8 518.2 C338.9 514.8 339.6 510.5 339.6 506.9 C339.5 503.3 338.9 500.4 338.7 496.6 C338.5 492.7 338.8 487.7 338.4 483.8 C337.9 480.0 336.5 476.9 336.0 473.5 C335.6 470.0 336.2 466.3 335.9 463.2 C335.5 460.2 334.2 458.4 333.9 455.1 C333.6 451.8 334.6 446.9 334.1 443.4 C333.6 439.9 331.8 436.7 330.8 434.0 C329.8 431.2 329.0 429.4 328.2 426.8 C327.3 424.2 326.4 421.2 325.8 418.4 C325.3 415.7 325.0 413.4 325.0 410.1 C325.0 406.8 325.5 402.2 325.8 398.7 C326.0 395.2 326.2 392.3 326.5 389.3 C326.7 386.2 327.0 383.8 327.3 380.5 C327.6 377.3 328.0 373.3 328.3 369.8 C328.7 366.2 329.2 362.4 329.3 359.1 C329.5 355.8 329.4 352.8 329.4 349.8 C329.5 346.7 329.5 344.0 329.7 340.8 C329.9 337.5 330.6 333.8 330.7 330.3 C330.7 326.7 329.9 322.9 329.9 319.4 C329.8 315.9 330.3 312.4 330.3 309.3 C330.4 306.3 330.2 304.0 330.1 300.9 C330.1 297.8 330.1 294.3 330.1 290.7 C330.2 287.1 330.7 283.0 330.7 279.1 C330.7 275.2 330.2 270.9 330.3 267.3 C330.4 263.7 330.4 260.1 331.2 257.5 C332.0 255.0 333.5 254.0 335.0 252.0 Z" fill="#fff" filter="url(#b1)"/></mask>
<filter id="b1" filterUnits="userSpaceOnUse" x="290" y="90" width="940" height="660"><feGaussianBlur stdDeviation="0.7"/></filter>
<filter id="b2" filterUnits="userSpaceOnUse" x="290" y="90" width="940" height="660"><feGaussianBlur stdDeviation="1.4"/></filter>
<filter id="b4" filterUnits="userSpaceOnUse" x="290" y="90" width="940" height="660"><feGaussianBlur stdDeviation="3"/></filter>
<filter id="b6" filterUnits="userSpaceOnUse" x="290" y="90" width="940" height="660"><feGaussianBlur stdDeviation="5"/></filter>
<filter id="b10" filterUnits="userSpaceOnUse" x="290" y="90" width="940" height="660"><feGaussianBlur stdDeviation="8"/></filter>
<filter id="b16" filterUnits="userSpaceOnUse" x="290" y="90" width="940" height="660"><feGaussianBlur stdDeviation="14"/></filter>
<filter id="b24" filterUnits="userSpaceOnUse" x="290" y="90" width="940" height="660"><feGaussianBlur stdDeviation="24"/></filter>
<filter id="tex" x="0" y="0" width="100%" height="100%" color-interpolation-filters="sRGB">
<feTurbulence type="turbulence" baseFrequency="0.013 0.017" numOctaves="6" seed="7" result="n"/>
<feDiffuseLighting in="n" surfaceScale="8.5" diffuseConstant="0.653" lighting-color="#ffffff" result="l"><feDistantLight azimuth="262" elevation="50"/></feDiffuseLighting>
<feGaussianBlur stdDeviation="0.8"/>
</filter>
<filter id="texf" x="0" y="0" width="100%" height="100%" color-interpolation-filters="sRGB">
<feTurbulence type="fractalNoise" baseFrequency="0.07 0.08" numOctaves="3" seed="19" result="n"/>
<feDiffuseLighting in="n" surfaceScale="2.4" diffuseConstant="0.653" lighting-color="#ffffff" result="l"><feDistantLight azimuth="270" elevation="50"/></feDiffuseLighting>
<feGaussianBlur stdDeviation="0.8"/>
</filter>
<filter id="tex2" x="0" y="0" width="100%" height="100%" color-interpolation-filters="sRGB">
<feTurbulence type="fractalNoise" baseFrequency="0.018 0.022" numOctaves="3" seed="11" result="n"/>
<feColorMatrix in="n" type="matrix" values="0 0 0 0 0  0 0 0 0 0  0 0 0 0 0  2.2 0 0 0 -0.75"/>
</filter>
<filter id="tex3" x="0" y="0" width="100%" height="100%" color-interpolation-filters="sRGB">
<feTurbulence type="fractalNoise" baseFrequency="0.02 0.024" numOctaves="3" seed="23" result="n"/>
<feColorMatrix in="n" type="matrix" values="0 0 0 0 1  0 0 0 0 0.9  0 0 0 0 0.75  0 2.2 0 0 -0.85"/>
</filter>
<filter id="edge" x="-5%" y="-5%" width="110%" height="110%"><feTurbulence type="fractalNoise" baseFrequency="0.12" numOctaves="2" seed="3" result="n"/><feDisplacementMap in="SourceGraphic" in2="n" scale="3.5" xChannelSelector="R" yChannelSelector="G"/></filter>
</defs>
<g style="filter:saturate(1.14)">
<g mask="url(#basemask)">
<rect x="310" y="230" width="690" height="500" fill="#4e3f33"/>
<path d="M365.5 255.0 C387.8 253.3 432.5 253.6 466.0 253.6 C499.5 253.6 544.2 253.3 566.5 255.0 C588.8 256.7 593.7 257.9 600.0 263.8 C606.3 269.6 604.0 281.2 604.0 290.0 C604.0 298.8 606.3 310.4 600.0 316.2 C593.7 322.1 588.8 323.3 566.5 325.0 C544.2 326.7 499.5 326.4 466.0 326.4 C432.5 326.4 387.8 326.7 365.5 325.0 C343.2 323.3 338.3 322.1 332.0 316.2 C325.7 310.4 328.0 298.8 328.0 290.0 C328.0 281.2 325.7 269.6 332.0 263.8 C338.3 257.9 343.2 256.7 365.5 255.0 Z" fill="#4b3c30" opacity="0.95" filter="url(#b10)"/>
<ellipse cx="392" cy="290" rx="20" ry="13" transform="rotate(0 392 290)" fill="#2f2621" opacity="0.8" filter="url(#b6)"/>
<ellipse cx="352" cy="300" rx="9" ry="24" transform="rotate(0 352 300)" fill="#332922" opacity="0.7" filter="url(#b6)"/>
<ellipse cx="450" cy="312" rx="30" ry="10" transform="rotate(5 450 312)" fill="#574537" opacity="0.8" filter="url(#b6)"/>
<ellipse cx="540" cy="310" rx="40" ry="10" transform="rotate(0 540 310)" fill="#4f4035" opacity="0.8" filter="url(#b6)"/>
<path d="M598.0 282.0 C600.5 274.2 589.7 277.3 640.0 277.0 C690.3 276.7 852.5 276.5 900.0 280.0 C947.5 283.5 921.7 288.3 925.0 298.0 C928.3 307.7 942.5 328.0 920.0 338.0 C897.5 348.0 826.7 356.3 790.0 358.0 C753.3 359.7 727.5 353.7 700.0 348.0 C672.5 342.3 642.0 335.0 625.0 324.0 C608.0 313.0 595.5 289.8 598.0 282.0 Z" fill="#564c42" opacity="1.0" filter="url(#b6)"/>
<path d="M640.0 283.0 C683.3 281.0 855.8 282.3 900.0 285.0 C944.2 287.7 948.3 297.0 905.0 299.0 C861.7 301.0 684.2 299.7 640.0 297.0 C595.8 294.3 596.7 285.0 640.0 283.0 Z" fill="#6e6358" opacity="0.85" filter="url(#b4)"/>
<ellipse cx="760" cy="325" rx="90" ry="16" transform="rotate(4 760 325)" fill="#463d34" opacity="0.7" filter="url(#b10)"/>
<ellipse cx="640" cy="330" rx="30" ry="10" transform="rotate(25 640 330)" fill="#3f352e" opacity="0.6" filter="url(#b6)"/>
<path d="M926.9 300.0 C931.5 297.6 940.6 298.0 947.5 298.0 C954.4 298.0 963.5 297.6 968.1 300.0 C972.7 302.4 973.7 304.2 975.0 312.5 C976.3 320.8 975.8 337.5 975.8 350.0 C975.8 362.5 976.3 379.2 975.0 387.5 C973.7 395.8 972.7 397.6 968.1 400.0 C963.5 402.4 954.4 402.0 947.5 402.0 C940.6 402.0 931.5 402.4 926.9 400.0 C922.3 397.6 921.3 395.8 920.0 387.5 C918.7 379.2 919.2 362.5 919.2 350.0 C919.2 337.5 918.7 320.8 920.0 312.5 C921.3 304.2 922.3 302.4 926.9 300.0 Z" fill="#3f3429" opacity="0.9" filter="url(#b6)"/>
<path d="M428.0 326.0 C440.7 318.3 472.2 318.3 500.0 318.0 C527.8 317.7 578.7 305.0 595.0 324.0 C611.3 343.0 617.2 413.0 598.0 432.0 C578.8 451.0 506.3 441.3 480.0 438.0 C453.7 434.7 449.3 424.3 440.0 412.0 C430.7 399.7 426.0 378.3 424.0 364.0 C422.0 349.7 415.3 333.7 428.0 326.0 Z" fill="#53483c" opacity="1.0" filter="url(#b10)"/>
<path d="M436.0 392.0 C441.0 388.7 473.3 419.7 500.0 426.0 C526.7 432.3 580.0 427.5 596.0 430.0 C612.0 432.5 617.0 438.3 596.0 441.0 C575.0 443.7 496.7 454.2 470.0 446.0 C443.3 437.8 431.0 395.3 436.0 392.0 Z" fill="#6b5649" opacity="0.85" filter="url(#b4)"/>
<ellipse cx="520" cy="395" rx="55" ry="22" transform="rotate(0 520 395)" fill="#62574a" opacity="0.7" filter="url(#b10)"/>
<path d="M474.0 450.0 C487.0 443.7 541.3 441.0 556.0 448.0 C570.7 455.0 570.5 483.0 562.0 492.0 C553.5 501.0 519.0 503.0 505.0 502.0 C491.0 501.0 483.2 494.7 478.0 486.0 C472.8 477.3 461.0 456.3 474.0 450.0 Z" fill="#27231e" opacity="0.95" filter="url(#b6)"/>
<ellipse cx="512" cy="468" rx="26" ry="12" transform="rotate(0 512 468)" fill="#1f1c18" opacity="0.8" filter="url(#b6)"/>
<path d="M598.0 335.0 C599.0 345.8 604.3 377.5 604.0 400.0 C603.7 422.5 597.3 458.3 596.0 470.0" fill="none" stroke="#1d1815" stroke-width="11" stroke-linecap="round" stroke-linejoin="round" opacity="0.85" filter="url(#b4)"/>
<path d="M621.2 340.0 C628.8 337.1 643.8 337.6 655.0 337.6 C666.2 337.6 681.2 337.1 688.8 340.0 C696.2 342.9 697.9 345.0 700.0 355.0 C702.1 365.0 701.4 385.0 701.4 400.0 C701.4 415.0 702.1 435.0 700.0 445.0 C697.9 455.0 696.2 457.1 688.8 460.0 C681.2 462.9 666.2 462.4 655.0 462.4 C643.8 462.4 628.8 462.9 621.2 460.0 C613.8 457.1 612.1 455.0 610.0 445.0 C607.9 435.0 608.6 415.0 608.6 400.0 C608.6 385.0 607.9 365.0 610.0 355.0 C612.1 345.0 613.8 342.9 621.2 340.0 Z" fill="#45392f" opacity="0.95" filter="url(#b10)"/>
<ellipse cx="622" cy="470" rx="22" ry="13" transform="rotate(10 622 470)" fill="#6c5e47" opacity="0.8" filter="url(#b6)"/>
<ellipse cx="690" cy="440" rx="30" ry="25" transform="rotate(0 690 440)" fill="#54402f" opacity="0.7" filter="url(#b10)"/>
<path d="M340.5 330.0 C348.8 326.6 365.5 327.2 378.0 327.2 C390.5 327.2 407.2 326.6 415.5 330.0 C423.8 333.4 425.7 335.8 428.0 347.5 C430.3 359.2 429.5 382.5 429.5 400.0 C429.5 417.5 430.3 440.8 428.0 452.5 C425.7 464.2 423.8 466.6 415.5 470.0 C407.2 473.4 390.5 472.8 378.0 472.8 C365.5 472.8 348.8 473.4 340.5 470.0 C332.2 466.6 330.3 464.2 328.0 452.5 C325.7 440.8 326.5 417.5 326.5 400.0 C326.5 382.5 325.7 359.2 328.0 347.5 C330.3 335.8 332.2 333.4 340.5 330.0 Z" fill="#3d2f26" opacity="0.95" filter="url(#b10)"/>
<path d="M341.9 465.0 C349.8 461.7 365.6 462.3 377.5 462.3 C389.4 462.3 405.2 461.7 413.1 465.0 C421.0 468.3 422.8 470.6 425.0 481.9 C427.2 493.1 426.4 515.6 426.4 532.5 C426.4 549.4 427.2 571.9 425.0 583.1 C422.8 594.4 421.0 596.7 413.1 600.0 C405.2 603.3 389.4 602.7 377.5 602.7 C365.6 602.7 349.8 603.3 341.9 600.0 C334.0 596.7 332.2 594.4 330.0 583.1 C327.8 571.9 328.6 549.4 328.6 532.5 C328.6 515.6 327.8 493.1 330.0 481.9 C332.2 470.6 334.0 468.3 341.9 465.0 Z" fill="#4e3a2d" opacity="0.95" filter="url(#b10)"/>
<ellipse cx="386" cy="506" rx="27" ry="25" transform="rotate(25 386 506)" fill="#806a52" opacity="0.95" filter="url(#b6)"/>
<ellipse cx="372" cy="520" rx="12" ry="14" transform="rotate(0 372 520)" fill="#8c7658" opacity="0.7" filter="url(#b4)"/>
<ellipse cx="344" cy="522" rx="8" ry="75" transform="rotate(-3 344 522)" fill="#2a201a" opacity="0.8" filter="url(#b4)"/>
<ellipse cx="372" cy="548" rx="26" ry="10" transform="rotate(-10 372 548)" fill="#2e241d" opacity="0.7" filter="url(#b4)"/>
<ellipse cx="440" cy="470" rx="10" ry="40" transform="rotate(-25 440 470)" fill="#32271f" opacity="0.7" filter="url(#b4)"/>
<ellipse cx="340" cy="470" rx="8" ry="70" transform="rotate(-3 340 470)" fill="#3b2e26" opacity="0.7" filter="url(#b4)"/>
<ellipse cx="418" cy="385" rx="10" ry="52" transform="rotate(-18 418 385)" fill="#2a201b" opacity="0.8" filter="url(#b6)"/>
<ellipse cx="385" cy="365" rx="22" ry="14" transform="rotate(30 385 365)" fill="#574136" opacity="0.7" filter="url(#b6)"/>
<ellipse cx="496" cy="533" rx="38" ry="17" transform="rotate(10 496 533)" fill="#6b5845" opacity="0.9" filter="url(#b6)"/>
<ellipse cx="500" cy="556" rx="40" ry="8" transform="rotate(12 500 556)" fill="#2c241f" opacity="0.7" filter="url(#b4)"/>
<path d="M349.0 545.0 C368.2 534.7 436.5 533.8 455.0 548.0 C473.5 562.2 472.5 616.0 460.0 630.0 C447.5 644.0 400.0 635.3 380.0 632.0 C360.0 628.7 345.2 624.5 340.0 610.0 C334.8 595.5 329.8 555.3 349.0 545.0 Z" fill="#33271f" opacity="0.95" filter="url(#b10)"/>
<ellipse cx="523" cy="640" rx="36" ry="24" transform="rotate(15 523 640)" fill="#847153" opacity="0.75" filter="url(#b10)"/>
<path d="M595.6 560.0 C609.4 556.6 636.9 557.2 657.5 557.2 C678.1 557.2 705.6 556.6 719.4 560.0 C733.1 563.4 736.1 565.8 740.0 577.5 C743.9 589.2 742.5 612.5 742.5 630.0 C742.5 647.5 743.9 670.8 740.0 682.5 C736.1 694.2 733.1 696.6 719.4 700.0 C705.6 703.4 678.1 702.8 657.5 702.8 C636.9 702.8 609.4 703.4 595.6 700.0 C581.9 696.6 578.9 694.2 575.0 682.5 C571.1 670.8 572.5 647.5 572.5 630.0 C572.5 612.5 571.1 589.2 575.0 577.5 C578.9 565.8 581.9 563.4 595.6 560.0 Z" fill="#5a4636" opacity="0.9" filter="url(#b10)"/>
<ellipse cx="640" cy="480" rx="30" ry="40" transform="rotate(0 640 480)" fill="#4c3d33" opacity="0.6" filter="url(#b10)"/>
<ellipse cx="560" cy="580" rx="40" ry="20" transform="rotate(30 560 580)" fill="#6e5a4a" opacity="0.6" filter="url(#b10)"/>
<path d="M711.2 362.0 C725.4 359.4 753.8 359.9 775.0 359.9 C796.2 359.9 824.6 359.4 838.8 362.0 C852.9 364.6 856.0 366.4 860.0 375.2 C864.0 384.1 862.5 401.8 862.5 415.0 C862.5 428.2 864.0 445.9 860.0 454.8 C856.0 463.6 852.9 465.4 838.8 468.0 C824.6 470.6 796.2 470.1 775.0 470.1 C753.8 470.1 725.4 470.6 711.2 468.0 C697.1 465.4 694.0 463.6 690.0 454.8 C686.0 445.9 687.5 428.2 687.5 415.0 C687.5 401.8 686.0 384.1 690.0 375.2 C694.0 366.4 697.1 364.6 711.2 362.0 Z" fill="#4f3f33" opacity="0.9" filter="url(#b10)"/>
<ellipse cx="740" cy="420" rx="45" ry="28" transform="rotate(-20 740 420)" fill="#5b493e" opacity="0.7" filter="url(#b10)"/>
<ellipse cx="882" cy="415" rx="22" ry="34" transform="rotate(10 882 415)" fill="#6e5339" opacity="0.8" filter="url(#b10)"/>
<path d="M913.8 400.0 C919.6 392.8 931.2 394.0 940.0 394.0 C948.8 394.0 960.4 392.8 966.2 400.0 C972.1 407.2 973.4 412.5 975.0 437.5 C976.6 462.5 976.0 512.5 976.0 550.0 C976.0 587.5 976.6 637.5 975.0 662.5 C973.4 687.5 972.1 692.8 966.2 700.0 C960.4 707.2 948.8 706.0 940.0 706.0 C931.2 706.0 919.6 707.2 913.8 700.0 C907.9 692.8 906.6 687.5 905.0 662.5 C903.4 637.5 904.0 587.5 904.0 550.0 C904.0 512.5 903.4 462.5 905.0 437.5 C906.6 412.5 907.9 407.2 913.8 400.0 Z" fill="#3a2f26" opacity="0.85" filter="url(#b10)"/>
<path d="M679.0 478.0 C698.5 469.7 763.2 466.7 790.0 470.0 C816.8 473.3 832.0 486.0 840.0 498.0 C848.0 510.0 861.3 533.8 838.0 542.0 C814.7 550.2 727.5 550.7 700.0 547.0 C672.5 543.3 676.5 531.5 673.0 520.0 C669.5 508.5 659.5 486.3 679.0 478.0 Z" fill="#857763" opacity="0.95" filter="url(#b10)"/>
<ellipse cx="812" cy="518" rx="22" ry="13" transform="rotate(-10 812 518)" fill="#a39375" opacity="0.85" filter="url(#b6)"/>
<ellipse cx="740" cy="562" rx="60" ry="16" transform="rotate(5 740 562)" fill="#87715b" opacity="0.9" filter="url(#b6)"/>
<path d="M690.0 548.0 C701.7 547.5 741.7 548.0 760.0 545.0 C778.3 542.0 793.3 532.5 800.0 530.0" fill="none" stroke="#2f2620" stroke-width="3" stroke-linecap="round" stroke-linejoin="round" opacity="0.6" filter="url(#b2)"/>
<path d="M652.8 585.0 C661.2 581.9 678.2 582.5 691.0 582.5 C703.8 582.5 720.8 581.9 729.2 585.0 C737.8 588.1 739.6 590.3 742.0 600.9 C744.4 611.5 743.5 632.6 743.5 648.5 C743.5 664.4 744.4 685.5 742.0 696.1 C739.6 706.7 737.8 708.9 729.2 712.0 C720.8 715.1 703.8 714.5 691.0 714.5 C678.2 714.5 661.2 715.1 652.8 712.0 C644.2 708.9 642.4 706.7 640.0 696.1 C637.6 685.5 638.5 664.4 638.5 648.5 C638.5 632.6 637.6 611.5 640.0 600.9 C642.4 590.3 644.2 588.1 652.8 585.0 Z" fill="#634a35" opacity="0.9" filter="url(#b10)"/>
<path d="M752.0 580.0 C763.7 566.7 804.0 548.0 816.0 570.0 C828.0 592.0 832.3 688.3 824.0 712.0 C815.7 735.7 779.0 722.3 766.0 712.0 C753.0 701.7 748.3 672.0 746.0 650.0 C743.7 628.0 740.3 593.3 752.0 580.0 Z" fill="#30251e" opacity="0.9" filter="url(#b10)"/>
<ellipse cx="810" cy="655" rx="9" ry="55" transform="rotate(2 810 655)" fill="#19130f" opacity="0.8" filter="url(#b4)"/>
<path d="M839.4 555.0 C849.0 552.7 868.1 553.1 882.5 553.1 C896.9 553.1 916.0 552.7 925.6 555.0 C935.2 557.3 937.3 559.0 940.0 566.9 C942.7 574.8 941.7 590.6 941.7 602.5 C941.7 614.4 942.7 630.2 940.0 638.1 C937.3 646.0 935.2 647.7 925.6 650.0 C916.0 652.3 896.9 651.9 882.5 651.9 C868.1 651.9 849.0 652.3 839.4 650.0 C829.8 647.7 827.7 646.0 825.0 638.1 C822.3 630.2 823.3 614.4 823.3 602.5 C823.3 590.6 822.3 574.8 825.0 566.9 C827.7 559.0 829.8 557.3 839.4 555.0 Z" fill="#5a4b3b" opacity="0.95" filter="url(#b10)"/>
<ellipse cx="872" cy="617" rx="38" ry="24" transform="rotate(-15 872 617)" fill="#6f573c" opacity="0.85" filter="url(#b6)"/>
<path d="M818.0 655.0 C841.3 642.3 933.8 632.5 960.0 640.0 C986.2 647.5 998.3 687.3 975.0 700.0 C951.7 712.7 846.2 723.5 820.0 716.0 C793.8 708.5 794.7 667.7 818.0 655.0 Z" fill="#382c24" opacity="0.9" filter="url(#b6)"/>
<ellipse cx="900" cy="566" rx="42" ry="14" transform="rotate(-12 900 566)" fill="#6a5b49" opacity="0.85" filter="url(#b6)"/>
<ellipse cx="958" cy="600" rx="8" ry="50" transform="rotate(3 958 600)" fill="#6a5236" opacity="0.7" filter="url(#b4)"/>
<ellipse cx="578" cy="606" rx="22" ry="17" transform="rotate(25 578 606)" fill="#28221b" opacity="0.8" filter="url(#b6)"/>
<ellipse cx="520" cy="642" rx="30" ry="22" transform="rotate(15 520 642)" fill="#82704f" opacity="0.6" filter="url(#b6)"/>
<ellipse cx="600" cy="545" rx="35" ry="25" transform="rotate(0 600 545)" fill="#675443" opacity="0.6" filter="url(#b10)"/>
<path d="M334.0 254.0 C348.3 256.3 375.7 264.2 420.0 268.0 C464.3 271.8 520.0 275.0 600.0 277.0 C680.0 279.0 840.0 276.2 900.0 280.0 C960.0 283.8 950.0 296.7 960.0 300.0" fill="none" stroke="#1c1714" stroke-width="9" stroke-linecap="round" stroke-linejoin="round" opacity="0.8" filter="url(#b4)"/>
<path d="M350.0 262.0 C361.7 264.2 391.7 271.7 420.0 275.0 C448.3 278.3 503.3 280.8 520.0 282.0" fill="none" stroke="#1c1714" stroke-width="12" stroke-linecap="round" stroke-linejoin="round" opacity="0.6" filter="url(#b6)"/>
<path d="M360.0 250.0 C366.7 252.0 384.2 258.3 400.0 262.0 C415.8 265.7 445.8 270.3 455.0 272.0" fill="none" stroke="#0d0b09" stroke-width="6" stroke-linecap="round" stroke-linejoin="round" opacity="0.9" filter="url(#b2)"/>
<ellipse cx="938" cy="300" rx="30" ry="13" transform="rotate(25 938 300)" fill="#0f0c0a" opacity="0.95" filter="url(#b4)"/>
<path d="M690.0 500.0 C695.0 500.8 711.7 506.3 720.0 505.0 C728.3 503.7 731.7 493.2 740.0 492.0 C748.3 490.8 765.0 497.0 770.0 498.0" fill="none" stroke="#2a211b" stroke-width="2" stroke-linecap="round" stroke-linejoin="round" opacity="0.5" filter="url(#b2)"/>
<path d="M700.0 520.0 C710.0 519.3 743.3 518.5 760.0 516.0 C776.7 513.5 793.3 506.8 800.0 505.0" fill="none" stroke="#2f251e" stroke-width="2" stroke-linecap="round" stroke-linejoin="round" opacity="0.4" filter="url(#b2)"/>
<path d="M430.0 330.0 C431.3 336.7 438.3 356.7 438.0 370.0 C437.7 383.3 429.7 403.3 428.0 410.0" fill="none" stroke="#241c17" stroke-width="4" stroke-linecap="round" stroke-linejoin="round" opacity="0.6" filter="url(#b2)"/>
<path d="M600.0 470.0 C606.7 475.0 630.0 485.0 640.0 500.0 C650.0 515.0 656.7 550.0 660.0 560.0" fill="none" stroke="#2a211b" stroke-width="4" stroke-linecap="round" stroke-linejoin="round" opacity="0.45" filter="url(#b4)"/>
<path d="M850.0 470.0 C858.3 469.2 883.3 465.0 900.0 465.0 C916.7 465.0 941.7 469.2 950.0 470.0" fill="none" stroke="#2a211b" stroke-width="3" stroke-linecap="round" stroke-linejoin="round" opacity="0.5" filter="url(#b2)"/>
<path d="M835.0 600.0 C840.8 598.3 857.5 590.0 870.0 590.0 C882.5 590.0 903.3 598.3 910.0 600.0" fill="none" stroke="#30261f" stroke-width="3" stroke-linecap="round" stroke-linejoin="round" opacity="0.5" filter="url(#b2)"/>
<path d="M460.0 560.0 C470.0 562.5 503.3 568.3 520.0 575.0 C536.7 581.7 553.3 595.8 560.0 600.0" fill="none" stroke="#281f19" stroke-width="4" stroke-linecap="round" stroke-linejoin="round" opacity="0.5" filter="url(#b2)"/>
<path d="M786.0 356.0 C796.7 354.7 828.0 351.7 850.0 348.0 C872.0 344.3 906.7 336.3 918.0 334.0" fill="none" stroke="#1d1814" stroke-width="1.6" stroke-linecap="round" stroke-linejoin="round" opacity="0.8" filter="url(#b1)"/>
<path d="M700.0 400.0 C710.0 406.7 748.3 420.0 760.0 440.0 C771.7 460.0 768.3 506.7 770.0 520.0" fill="none" stroke="#2b221c" stroke-width="4" stroke-linecap="round" stroke-linejoin="round" opacity="0.45" filter="url(#b4)"/>
<path d="M350.0 340.0 C355.0 353.3 371.7 390.0 380.0 420.0 C388.3 450.0 390.0 490.0 400.0 520.0 C410.0 550.0 433.3 586.7 440.0 600.0" fill="none" stroke="#31261f" stroke-width="5" stroke-linecap="round" stroke-linejoin="round" opacity="0.4" filter="url(#b4)"/>
<rect x="310" y="230" width="690" height="500" fill="#17110d" filter="url(#tex2)" opacity="0.16"/>
<rect x="310" y="230" width="690" height="500" filter="url(#tex)" style="mix-blend-mode:hard-light" opacity="0.5"/>
<rect x="310" y="230" width="690" height="500" filter="url(#texf)" style="mix-blend-mode:hard-light" opacity="0.35"/>
<path d="M610.0 288.0 C610.8 281.5 592.5 283.3 640.0 283.0 C687.5 282.7 848.7 282.8 895.0 286.0 C941.3 289.2 914.8 294.0 918.0 302.0 C921.2 310.0 935.3 325.7 914.0 334.0 C892.7 342.3 825.7 350.5 790.0 352.0 C754.3 353.5 725.8 348.0 700.0 343.0 C674.2 338.0 650.0 331.2 635.0 322.0 C620.0 312.8 609.2 294.5 610.0 288.0 Z" fill="#574d43" opacity="0.45" filter="url(#b6)"/>
<path d="M460.0 345.0 C480.5 340.0 555.0 327.2 575.0 338.0 C595.0 348.8 592.5 396.7 580.0 410.0 C567.5 423.3 518.3 420.0 500.0 418.0 C481.7 416.0 478.0 406.3 470.0 398.0 C462.0 389.7 453.7 376.8 452.0 368.0 C450.3 359.2 439.5 350.0 460.0 345.0 Z" fill="#54493d" opacity="0.3" filter="url(#b16)"/>
<path d="M786.0 356.0 C796.7 354.7 828.0 351.7 850.0 348.0 C872.0 344.3 906.7 336.3 918.0 334.0" fill="none" stroke="#1d1814" stroke-width="1.5" stroke-linecap="round" stroke-linejoin="round" opacity="0.8" filter="url(#b1)"/>
</g></g>
<g style="filter:saturate(1.14)">
<g mask="url(#capmask)">
<rect x="330" y="115" width="870" height="210" fill="#64503e"/>
<path d="M342.0 200.0 C346.5 192.3 353.7 186.0 370.0 182.0 C386.3 178.0 403.3 174.7 440.0 176.0 C476.7 177.3 563.3 175.2 590.0 190.0 C616.7 204.8 620.0 252.0 600.0 265.0 C580.0 278.0 509.3 271.3 470.0 268.0 C430.7 264.7 385.2 251.7 364.0 245.0 C342.8 238.3 346.7 235.5 343.0 228.0 C339.3 220.5 337.5 207.7 342.0 200.0 Z" fill="#705a47" opacity="1.0" filter="url(#b6)"/>
<ellipse cx="410" cy="192" rx="50" ry="8" transform="rotate(-4 410 192)" fill="#88705a" opacity="0.8" filter="url(#b4)"/>
<path d="M440.0 128.0 C448.3 120.0 466.7 122.0 500.0 124.0 C533.3 126.0 615.0 130.7 640.0 140.0 C665.0 149.3 663.3 172.5 650.0 180.0 C636.7 187.5 593.3 186.3 560.0 185.0 C526.7 183.7 470.0 181.5 450.0 172.0 C430.0 162.5 431.7 136.0 440.0 128.0 Z" fill="#71655a" opacity="1.0" filter="url(#b6)"/>
<ellipse cx="456" cy="140" rx="20" ry="13" transform="rotate(10 456 140)" fill="#2a2725" opacity="0.8" filter="url(#b6)"/>
<ellipse cx="447" cy="134" rx="8" ry="8" transform="rotate(0 447 134)" fill="#1f1d1b" opacity="0.7" filter="url(#b4)"/>
<ellipse cx="536" cy="158" rx="15" ry="17" transform="rotate(20 536 158)" fill="#352e2c" opacity="0.95" filter="url(#b4)"/>
<ellipse cx="490" cy="172" rx="40" ry="5" transform="rotate(8 490 172)" fill="#3d3430" opacity="0.7" filter="url(#b4)"/>
<path d="M650.0 143.0 C660.0 136.2 646.7 139.2 700.0 139.0 C753.3 138.8 920.0 136.8 970.0 142.0 C1020.0 147.2 1001.7 161.2 1000.0 170.0 C998.3 178.8 993.3 190.3 960.0 195.0 C926.7 199.7 846.7 196.3 800.0 198.0 C753.3 199.7 706.7 208.0 680.0 205.0 C653.3 202.0 645.0 190.3 640.0 180.0 C635.0 169.7 640.0 149.8 650.0 143.0 Z" fill="#5a4e43" opacity="1.0" filter="url(#b6)"/>
<path d="M560.0 150.0 C574.2 142.7 616.7 146.0 640.0 146.0 C663.3 146.0 690.0 141.0 700.0 150.0 C710.0 159.0 716.7 190.8 700.0 200.0 C683.3 209.2 624.2 206.7 600.0 205.0 C575.8 203.3 561.7 199.2 555.0 190.0 C548.3 180.8 545.8 157.3 560.0 150.0 Z" fill="#6d5f52" opacity="0.9" filter="url(#b6)"/>
<ellipse cx="760" cy="172" rx="45" ry="20" transform="rotate(0 760 172)" fill="#483e36" opacity="0.8" filter="url(#b10)"/>
<ellipse cx="830" cy="165" rx="40" ry="18" transform="rotate(0 830 165)" fill="#493f37" opacity="0.7" filter="url(#b10)"/>
<path d="M600.0 225.0 C616.7 215.3 663.3 215.3 700.0 212.0 C736.7 208.7 770.0 207.0 820.0 205.0 C870.0 203.0 968.3 187.5 1000.0 200.0 C1031.7 212.5 1026.7 267.5 1010.0 280.0 C993.3 292.5 946.2 275.5 900.0 275.0 C853.8 274.5 783.0 277.8 733.0 277.0 C683.0 276.2 622.2 278.7 600.0 270.0 C577.8 261.3 583.3 234.7 600.0 225.0 Z" fill="#775843" opacity="1.0" filter="url(#b6)"/>
<ellipse cx="645" cy="247" rx="36" ry="12" transform="rotate(-8 645 247)" fill="#92795a" opacity="0.8" filter="url(#b6)"/>
<ellipse cx="700" cy="205" rx="30" ry="8" transform="rotate(-10 700 205)" fill="#8a7560" opacity="0.6" filter="url(#b4)"/>
<path d="M1005.0 172.0 C1023.3 162.0 1073.3 165.3 1100.0 170.0 C1126.7 174.7 1151.3 190.8 1165.0 200.0 C1178.7 209.2 1184.5 212.5 1182.0 225.0 C1179.5 237.5 1169.8 260.5 1150.0 275.0 C1130.2 289.5 1092.2 307.8 1063.0 312.0 C1033.8 316.2 987.2 313.7 975.0 300.0 C962.8 286.3 985.0 251.3 990.0 230.0 C995.0 208.7 986.7 182.0 1005.0 172.0 Z" fill="#765c45" opacity="1.0" filter="url(#b6)"/>
<ellipse cx="1138" cy="196" rx="29" ry="17" transform="rotate(25 1138 196)" fill="#3a3330" opacity="1.0" filter="url(#b4)"/>
<ellipse cx="1136" cy="194" rx="18" ry="10" transform="rotate(25 1136 194)" fill="#34302d" opacity="0.9" filter="url(#b4)"/>
<ellipse cx="1175" cy="228" rx="8" ry="16" transform="rotate(10 1175 228)" fill="#806a53" opacity="0.8" filter="url(#b4)"/>
<path d="M990.0 285.0 C1006.7 280.3 1075.0 282.2 1100.0 280.0 C1125.0 277.8 1140.0 268.0 1140.0 272.0 C1140.0 276.0 1112.8 297.0 1100.0 304.0 C1087.2 311.0 1079.7 313.3 1063.0 314.0 C1046.3 314.7 1012.2 312.8 1000.0 308.0 C987.8 303.2 973.3 289.7 990.0 285.0 Z" fill="#4a392e" opacity="0.9" filter="url(#b4)"/>
<path d="M1040.0 200.0 C1045.0 199.3 1061.7 195.7 1070.0 196.0 C1078.3 196.3 1086.7 201.0 1090.0 202.0" fill="none" stroke="#3b2f28" stroke-width="3" stroke-linecap="round" stroke-linejoin="round" opacity="0.7" filter="url(#b2)"/>
<path d="M1010.0 270.0 C1021.7 268.7 1056.7 265.3 1080.0 262.0 C1103.3 258.7 1138.3 252.0 1150.0 250.0" fill="none" stroke="#4a3a2f" stroke-width="3" stroke-linecap="round" stroke-linejoin="round" opacity="0.6" filter="url(#b2)"/>
<path d="M590.0 190.0 C591.0 196.7 594.3 217.0 596.0 230.0 C597.7 243.0 599.3 261.7 600.0 268.0" fill="none" stroke="#4a3d35" stroke-width="2.5" stroke-linecap="round" stroke-linejoin="round" opacity="0.6" filter="url(#b2)"/>
<path d="M560.0 185.0 C573.3 186.7 616.7 194.2 640.0 195.0 C663.3 195.8 680.0 189.2 700.0 190.0 C720.0 190.8 750.0 198.3 760.0 200.0" fill="none" stroke="#43382f" stroke-width="2.5" stroke-linecap="round" stroke-linejoin="round" opacity="0.5" filter="url(#b2)"/>
<path d="M455.0 176.0 C455.5 181.7 458.5 196.3 458.0 210.0 C457.5 223.7 453.0 250.0 452.0 258.0" fill="none" stroke="#3a2e27" stroke-width="2" stroke-linecap="round" stroke-linejoin="round" opacity="0.5" filter="url(#b2)"/>
<path d="M527.0 186.0 C528.0 192.5 532.8 211.3 533.0 225.0 C533.2 238.7 528.8 260.8 528.0 268.0" fill="none" stroke="#3a2e27" stroke-width="2" stroke-linecap="round" stroke-linejoin="round" opacity="0.5" filter="url(#b2)"/>
<path d="M470.0 222.0 C478.3 222.7 500.0 226.0 520.0 226.0 C540.0 226.0 578.3 222.7 590.0 222.0" fill="none" stroke="#3f332b" stroke-width="2" stroke-linecap="round" stroke-linejoin="round" opacity="0.4" filter="url(#b2)"/>
<path d="M650.0 182.0 C658.3 181.0 681.7 176.0 700.0 176.0 C718.3 176.0 740.0 181.7 760.0 182.0 C780.0 182.3 810.0 178.7 820.0 178.0" fill="none" stroke="#332a25" stroke-width="2.5" stroke-linecap="round" stroke-linejoin="round" opacity="0.45" filter="url(#b2)"/>
<path d="M700.0 140.0 C700.8 145.8 704.2 169.2 705.0 175.0" fill="none" stroke="#332a25" stroke-width="2.5" stroke-linecap="round" stroke-linejoin="round" opacity="0.4" filter="url(#b2)"/>
<path d="M640.0 232.0 C653.3 229.7 690.0 219.7 720.0 218.0 C750.0 216.3 790.0 222.7 820.0 222.0 C850.0 221.3 873.3 214.0 900.0 214.0 C926.7 214.0 966.7 220.7 980.0 222.0" fill="none" stroke="#4a372b" stroke-width="3" stroke-linecap="round" stroke-linejoin="round" opacity="0.4" filter="url(#b4)"/>
<path d="M1030.0 215.0 C1037.5 213.3 1061.7 205.0 1075.0 205.0 C1088.3 205.0 1099.2 211.2 1110.0 215.0 C1120.8 218.8 1135.0 225.8 1140.0 228.0" fill="none" stroke="#3b2f28" stroke-width="3" stroke-linecap="round" stroke-linejoin="round" opacity="0.55" filter="url(#b2)"/>
<path d="M1020.0 245.0 C1030.0 245.8 1061.7 250.8 1080.0 250.0 C1098.3 249.2 1121.7 241.7 1130.0 240.0" fill="none" stroke="#4a3a2e" stroke-width="2.5" stroke-linecap="round" stroke-linejoin="round" opacity="0.5" filter="url(#b2)"/>
<path d="M345.0 240.0 C348.2 242.0 351.5 247.5 364.0 252.0 C376.5 256.5 402.3 263.3 420.0 267.0 C437.7 270.7 431.7 272.3 470.0 274.0 C508.3 275.7 606.2 275.5 650.0 277.0 C693.8 278.5 703.8 282.5 733.0 283.0 C762.2 283.5 797.0 280.3 825.0 280.0 C853.0 279.7 886.3 278.2 901.0 281.0 C915.7 283.8 900.7 293.0 913.0 297.0 C925.3 301.0 964.7 303.7 975.0 305.0" fill="none" stroke="#2a221d" stroke-width="5" stroke-linecap="round" stroke-linejoin="round" opacity="0.65" filter="url(#b2)"/>
<rect x="330" y="115" width="870" height="210" fill="#17110d" filter="url(#tex2)" opacity="0.18"/>
<rect x="330" y="115" width="870" height="210" filter="url(#tex)" style="mix-blend-mode:hard-light" opacity="0.5"/>
<rect x="330" y="115" width="870" height="210" filter="url(#texf)" style="mix-blend-mode:hard-light" opacity="0.35"/>
</g></g>
<path d="M364.0 249.0 C373.3 251.4 402.3 259.8 420.0 263.5 C437.7 267.2 444.8 269.5 470.0 271.0 C495.2 272.5 541.0 271.9 571.0 272.3 C601.0 272.7 623.0 272.3 650.0 273.5 C677.0 274.7 703.8 279.1 733.0 279.5 C762.2 279.9 797.0 276.3 825.0 276.0 C853.0 275.7 886.5 274.8 901.0 277.5 C915.5 280.2 910.2 289.6 912.0 292.0" fill="none" stroke="#14110f" stroke-width="1.5" stroke-linecap="round" stroke-linejoin="round" opacity="0.85"/>
<g stroke="#ff1d1d" stroke-width="3" fill="none">
<path d="M962.5 307.7 V378.3 M1187.3 236.7 V378.3"/>
<path d="M949.6 366.7 H996.8 M1153.4 366.7 H1200.3"/>
</g>
<line x1="956.5" y1="372.7" x2="968.5" y2="360.7" stroke="#ff1d1d" stroke-width="6"/>
<line x1="1181.3" y1="360.7" x2="1193.3" y2="372.7" stroke="#ff1d1d" stroke-width="6"/>
<line x1="178.1" y1="118.7" x2="190.70000000000002" y2="131.3" stroke="#000" stroke-width="4.6"/>
<line x1="319.5" y1="55.2" x2="332.1" y2="67.8" stroke="#000" stroke-width="4.4"/>
<line x1="1180.9" y1="67.8" x2="1193.5" y2="55.2" stroke="#000" stroke-width="4.4"/>
<line x1="178.1" y1="621.5" x2="190.70000000000002" y2="608.9000000000001" stroke="#000" stroke-width="4.6"/>
<g class="vd" font-size="16.2" fill="#ff4a1e" text-anchor="middle">
<text x="257" y="174">Cascade</text><text x="258.8" y="192.9">Height:</text><text x="259.3" y="212.6">12.5"</text>
<text x="258.9" y="417.8">Base Rock</text><text x="258.2" y="437.6">Height:</text><text x="258.8" y="457.5">34.5"</text>
</g>
<text class="vd" x="1071.75" y="373.3" font-size="16.65" fill="#ff2a1a" text-anchor="middle">Hang over: 18"</text>
<text class="vd" x="184.5" y="376.6" font-size="16.5" font-weight="bold" fill="#000" text-anchor="middle">47" Height</text>
<text class="vd" x="756.6" y="67.9" font-size="16.7" font-weight="bold" fill="#000" text-anchor="middle">75" Width</text>
<path d="M709.5 69.6 H803.7" stroke="#000" stroke-width="1.4"/>
</svg>

<div id="tbl">
<div id="c1"><svg width="425" height="139" viewBox="0 0 425 139" style="position:absolute;left:0;top:0"><path d="M5.6 87.1 L11.1 64.7 L23.1 47.9 L34.4 55.5 L39.2 45.4 L53.7 44.7 L62.5 35.9 L71.8 41.7 L78.3 56.0 L79.6 70.5 L86.9 74.8 L91.9 87.1 Z" fill="none" stroke="#f0f0f0" stroke-width="1.6" stroke-linejoin="miter"/><path d="M39.2 45.4 L45.0 59.0 M53.7 44.7 L43.7 60.5 M34.4 55.5 L45.0 60.5 L81.8 85.6 M43.7 60.5 L79.6 70.5 M71.8 41.7 L68.8 65.2 L78.3 56.0 M68.8 65.2 L62.5 35.9 M11.1 64.7 L21.6 86.6 M5.6 87.1 L17.4 75.5 M23.1 47.9 L79.6 81.1 M79.6 70.5 L70.1 67.3" fill="none" stroke="#c8c8c8" stroke-width="0.8"/></svg>
<div id="uni">UNIVERSAL</div><div id="rocks">ROCKS</div></div>
<div id="c2"><div id="title">Sunset Grove</div></div>
<div id="c3"><div style="top:31px">A-06</div><div style="top:70px">Side Profile</div></div>
</div>
</body></html>
